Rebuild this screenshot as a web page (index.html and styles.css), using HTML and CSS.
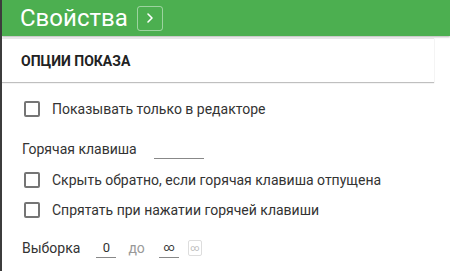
FILE: index.html
```html
<!DOCTYPE html>
<html lang="ru">
<head>
<meta charset="utf-8">
<link rel="stylesheet" href="styles.css">
</head>
<body>
<div class="app">
  <header class="header">
    <h1 class="title">Свойства</h1>
    <button class="expand" type="button">
      <svg width="10" height="12" viewBox="0 0 10 12"><path d="M3 2 L7 6 L3 10" fill="none" stroke="#fff" stroke-width="1.6" stroke-linecap="round" stroke-linejoin="round"/></svg>
    </button>
  </header>
  <div class="section-head">ОПЦИИ ПОКАЗА</div>
  <div class="content">
    <label class="check-row row-first"><span class="box"></span><span>Показывать только в редакторе</span></label>
    <div class="field-row hotkey-row"><span>Горячая клавиша</span><span class="line hotkey-line"></span></div>
    <label class="check-row row-cb2"><span class="box"></span><span>Скрыть обратно, если горячая клавиша отпущена</span></label>
    <label class="check-row row-cb3"><span class="box"></span><span>Спрятать при нажатии горячей клавиши</span></label>
    <div class="field-row select-row">
      <span>Выборка</span>
      <span class="line num-line num-from">0</span>
      <span class="muted">до</span>
      <span class="line num-line num-inf">∞</span>
      <span class="inf-btn">∞</span>
    </div>
  </div>
</div>
</body>
</html>
```
FILE: styles.css
```css
html, body {
  margin: 0;
  padding: 0;
  background: #fff;
}
body {
  font-family: Roboto, "Noto Sans", sans-serif;
  color: #333;
}
.app {
  width: 448px;
  height: 271px;
  border-left: 2px solid #3c3c3c;
  display: flex;
  flex-direction: column;
  overflow: hidden;
}
.header {
  height: 36px;
  flex: none;
  background: #4caf50;
  display: flex;
  align-items: center;
  padding-left: 18px;
  gap: 9px;
  box-shadow: 0 1px 2px rgba(0,0,0,0.3);
  position: relative;
  z-index: 1;
}
.title {
  margin: 0;
  font-size: 24px;
  font-weight: 400;
  color: #fff;
  line-height: 36px;
}
.expand {
  width: 26px;
  height: 25px;
  padding: 0;
  margin: 0;
  border: 1px solid rgba(255,255,255,0.45);
  border-radius: 3px;
  background: transparent;
  display: flex;
  align-items: center;
  justify-content: center;
}
.section-head {
  margin-top: 2px;
  margin-right: 16px;
  height: 43px;
  border-top: 1px solid #ececec;
  box-shadow: 0 1px 1px rgba(0,0,0,0.25);
  display: flex;
  align-items: center;
  padding-left: 19px;
  font-size: 14px;
  font-weight: 700;
  color: #222;
}
.content {
  padding-left: 20px;
  font-size: 14px;
  color: #333;
}
.check-row {
  display: flex;
  align-items: center;
  gap: 12px;
  height: 20px;
}
.box {
  width: 12px;
  height: 12px;
  border: 2px solid #757575;
  border-radius: 2px;
  margin-left: 2px;
  flex: none;
}
.row-first { margin-top: 17px; }
.field-row {
  display: flex;
  align-items: center;
  height: 20px;
}
.hotkey-row { margin-top: 20px; }
.row-cb2 { margin-top: 11px; }
.row-cb3 { margin-top: 10px; }
.select-row { margin-top: 18px; }
.line {
  border-bottom: 1px solid #888;
}
.hotkey-line {
  width: 50px;
  height: 18px;
  margin-left: 17px;
}
.num-line {
  width: 20px;
  height: 18px;
  text-align: center;
  line-height: 18px;
}
.num-from {
  margin-left: 16px;
  font-size: 13px;
}
.num-inf {
  font-size: 11px;
}
.muted {
  color: #999;
  margin: 0 14px 0 12px;
  font-size: 14px;
}
.inf-btn {
  width: 12px;
  height: 14px;
  margin-left: 9px;
  border: 1px solid #ddd;
  border-radius: 2px;
  color: #bbb;
  font-size: 9px;
  line-height: 14px;
  text-align: center;
}
```
